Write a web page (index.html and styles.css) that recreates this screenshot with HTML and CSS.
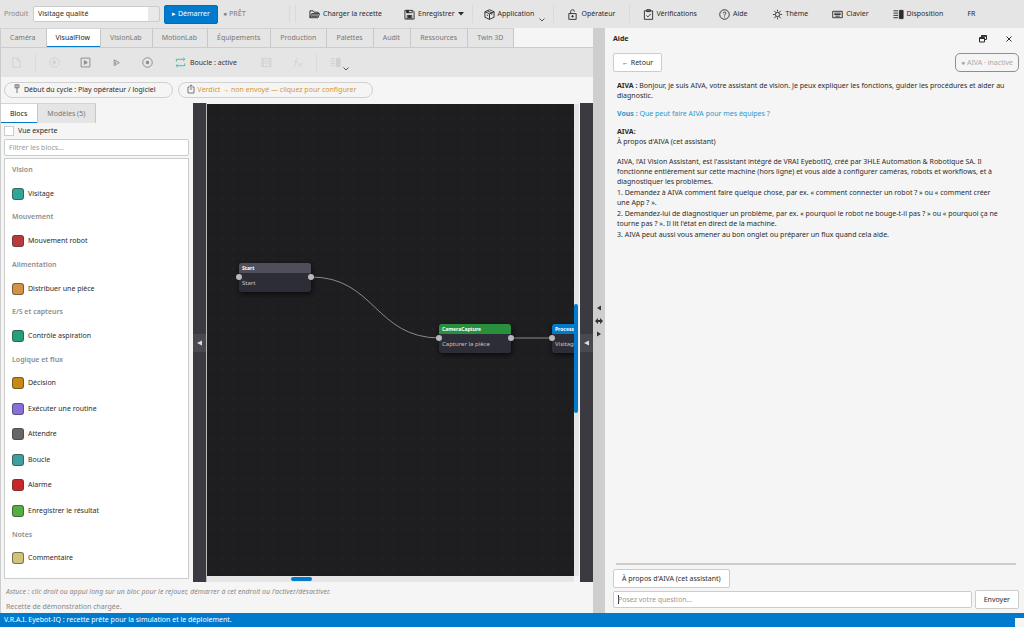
FILE: index.html
```html
<!DOCTYPE html>
<html lang="fr">
<head>
<meta charset="utf-8">
<title>V.R.A.I. Eyebot-IQ</title>
<link rel="stylesheet" href="styles.css">
</head>
<body>
<div class="app">
  <header class="topbar">
    <label class="product" for="product">Produit</label>
    <select class="product-select" id="product"><option>Visitage qualité</option></select>
    <button class="start">▸ Démarrer</button>
    <span class="state">● <b>PRÊT</b></span>
    <i class="sep sep-first"></i><i class="sep"></i>
    <button class="action"><svg class="icon" viewBox="0 0 12 12"><path d="M1 9.500V2h3.500l1 1.500H10V5M1 9.500 3 5h8.500L9.800 9.500zM2.500 8h7M3 6.500h7"/></svg>Charger la recette</button>
    <button class="action menu"><svg class="icon" viewBox="0 0 12 12"><path d="M1 1.500h8.500L11 3v8H1zM3 1.500V4h6V1.500M3.500 11V7h5v4"/><path class="fill" d="M5 7.500h2V10H5zM3 1.500h2V4H3z"/></svg>Enregistrer<svg class="caret" viewBox="0 0 6 4"><path d="M0 0h6L3 3.500z"/></svg></button>
    <i class="sep"></i>
    <button class="action menu"><svg class="icon" viewBox="0 0 12 12"><path d="M6 .8 11 3v6L6 11.300 1 9V3zM1 3l5 2.300L11 3M6 5.300v6M3.500 1.900l5 2.300v2M3 6.500l1.500.7"/></svg>Application<svg class="chevron" viewBox="0 0 6 4"><path d="M.5.500 3 3 5.500.500"/></svg></button>
    <i class="sep"></i>
    <button class="action wide"><svg class="icon" viewBox="0 0 12 12"><path d="M2 5h8v6.300H2zM4 5V2.800C4 .2 8 .2 8 2.500V3"/><circle class="fill" cx="6" cy="8" r=".8"/></svg>Opérateur</button>
    <i class="sep"></i>
    <button class="action wide"><svg class="icon" viewBox="0 0 12 12"><path d="M1.500 2h9v9.300h-9zM4 .8h4v2H4zM3.800 7l1.600 1.600L8.500 5.300"/></svg>Vérifications</button>
    <button class="action"><svg class="icon" viewBox="0 0 12 12"><circle cx="6" cy="6" r="5.200"/><path d="M4.500 4.800c0-2 3-2 3-.2C7.500 5.800 6 5.800 6 7.200M6 8.200v1"/></svg>Aide</button>
    <button class="action"><svg class="icon" viewBox="0 0 12 12"><circle cx="6" cy="6" r="2.300"/><path d="M6 .8v2M6 9.200v2M1 6h2M9 6h2M2.600 2l1.600 2M9.400 2 7.800 4M2.600 10l1.600-2M9.400 10 7.800 8"/></svg>Thème</button>
    <button class="action"><svg class="icon" viewBox="0 0 12 12"><path d="M.8 2.500h10.400v7H.8zM2.500 4.500h7M2.500 6h7M3.500 7.800h5"/></svg>Clavier</button>
    <button class="action"><svg class="icon" viewBox="0 0 12 12"><path d="M.5 2h5M.5 4.500h5M.5 7h5M.5 9.500h5"/><path class="fill" d="M7 1.500h4v9H7z"/></svg>Disposition</button>
    <button class="action">FR</button>
  </header>

  <main class="workspace">
    <section class="editor">
      <nav class="tabs">
        <button class="tab">Caméra</button><button class="tab active">VisualFlow</button><button class="tab">VisionLab</button><button class="tab">MotionLab</button><button class="tab">Équipements</button><button class="tab">Production</button><button class="tab">Palettes</button><button class="tab">Audit</button><button class="tab">Ressources</button><button class="tab">Twin 3D</button>
      </nav>
      <div class="toolbar">
        <button class="tool off" aria-label="Nouveau"><svg class="icon" viewBox="0 0 12 12"><path d="M2 1h5l3 3v7.300H2zM7 1v3h3"/></svg></button>
        <i class="sep"></i>
        <button class="tool off" aria-label="Reprendre"><svg class="icon" viewBox="0 0 12 12"><circle cx="6" cy="6" r="5.200"/><path class="fill" d="M4.800 4v4L8 6z"/></svg></button>
        <button class="tool" aria-label="Exécuter"><svg class="icon" viewBox="0 0 12 12"><path d="M1.200 1.200h9.600v9.600H1.200z"/><path class="fill" d="M4.800 4v4L8 6z"/></svg></button>
        <button class="tool" aria-label="Pas à pas"><svg class="icon" viewBox="0 0 12 12"><path d="M3.500 3v6.500L9 6.200zM5 5v2.500"/></svg></button>
        <button class="tool" aria-label="Arrêter"><svg class="icon" viewBox="0 0 12 12"><circle cx="6" cy="6" r="5.200"/><path class="fill" d="M4.800 4.800h2.400v2.400H4.800z"/></svg></button>
        <button class="tool loop"><svg class="icon" viewBox="0 0 12 12"><path d="M1.500 5V2.500h9M9 .8l1.800 1.700L9 4.200M10.500 7v2.500h-9M3 7.800 1.200 9.500 3 11.200"/></svg>Boucle : active</button>
        <button class="tool off" aria-label="Capture"><svg class="icon" viewBox="0 0 12 12"><path d="M1 1.500h10v9H1zM2.500 1.500v9M9.500 1.500v9"/><circle cx="6" cy="5.500" r="2"/></svg></button>
        <button class="tool off" aria-label="Fonctions"><svg class="icon" viewBox="0 0 12 12"><path d="M6.500 1.500C4.500.8 4.500 3 4 6S3 11 1 10.500M2.500 5h4M7 6.500l4 4M11 6.500l-4 4"/></svg></button>
        <i class="sep"></i>
        <button class="tool off" aria-label="Disposition du flux"><svg class="icon" viewBox="0 0 12 12"><path d="M.5 2h5M.5 4.500h5M.5 7h5M.5 9.500h5"/><path class="fill" d="M7 1.500h4v9H7z"/></svg><svg class="chevron" viewBox="0 0 6 4"><path d="M.5.500 3 3 5.500.500"/></svg></button>
      </div>
      <div class="chips">
        <button class="chip"><svg class="icon" viewBox="0 0 8 10"><path d="M2 .8h4v3H2zM4 .8V7M3 8h2"/></svg>Début du cycle : Play opérateur / logiciel</button>
        <button class="chip warn"><svg class="icon" viewBox="0 0 8 10"><path d="M2.500 3H1v6h6V3H5.500M4 6V1M2.500 2.300 4 .8l1.500 1.500"/></svg>Verdict → non envoyé — cliquez pour configurer</button>
      </div>
      <div class="stage">
        <aside class="library">
          <div class="subtabs"><button class="tab active">Blocs</button><button class="tab">Modèles (5)</button></div>
          <label class="expert"><input type="checkbox">Vue experte</label>
          <input class="filter" type="text" placeholder="Filtrer les blocs..." aria-label="Filtrer les blocs">
          <ul class="blocks">
            <li class="group">Vision</li>
            <li class="block"><i class="swatch teal"></i>Visitage</li>
            <li class="group">Mouvement</li>
            <li class="block"><i class="swatch crimson"></i>Mouvement robot</li>
            <li class="group">Alimentation</li>
            <li class="block"><i class="swatch orange"></i>Distribuer une pièce</li>
            <li class="group">E/S et capteurs</li>
            <li class="block"><i class="swatch emerald"></i>Contrôle aspiration</li>
            <li class="group">Logique et flux</li>
            <li class="block"><i class="swatch amber"></i>Décision</li>
            <li class="block"><i class="swatch violet"></i>Exécuter une routine</li>
            <li class="block"><i class="swatch gray"></i>Attendre</li>
            <li class="block"><i class="swatch cyan"></i>Boucle</li>
            <li class="block"><i class="swatch red"></i>Alarme</li>
            <li class="block"><i class="swatch green"></i>Enregistrer le résultat</li>
            <li class="group">Notes</li>
            <li class="block"><i class="swatch sand"></i>Commentaire</li>
          </ul>
        </aside>
        <div class="rail"><button class="handle" aria-label="Replier la bibliothèque"><svg viewBox="0 0 5 6"><path d="M5 .500v5L0 3z"/></svg></button></div>
        <div class="view">
          <div class="canvas">
            <svg class="wires"><path d="M104 173C168 173 168 234 233 234M305 234h41"/></svg>
            <div class="node start-node"><div class="node-title">Start</div><div class="node-text">Start</div><i class="port in"></i><i class="port out"></i></div>
            <div class="node camera-node"><div class="node-title">CameraCapture</div><div class="node-text">Capturer la pièce</div><i class="port in"></i><i class="port out"></i></div>
            <div class="node process-node"><div class="node-title">Process</div><div class="node-text">Visitage</div><i class="port in"></i></div>
          </div>
          <div class="vscroll"><i class="thumb"></i></div>
          <div class="hscroll"><i class="thumb"></i></div>
        </div>
        <div class="rail rail-right"><button class="handle" aria-label="Replier les propriétés"><svg viewBox="0 0 5 6"><path d="M5 .500v5L0 3z"/></svg></button></div>
      </div>
      <div class="notes">
        <p class="tip">Astuce : clic droit ou appui long sur un bloc pour le rejouer, démarrer à cet endroit ou l'activer/désactiver.</p>
        <p>Recette de démonstration chargée.</p>
      </div>
    </section>

    <div class="splitter">
      <svg viewBox="0 0 8 6"><path d="M6 .500v5L2 3z"/></svg>
      <svg viewBox="0 0 8 6"><path d="M0 3l3-3v2h2V0l3 3-3 3V4H3v2z"/></svg>
      <svg viewBox="0 0 8 6"><path d="M2 .500v5L6 3z"/></svg>
    </div>

    <section class="help">
      <div class="help-head">
        <h2>Aide</h2>
        <button class="plain" aria-label="Détacher"><svg viewBox="0 0 8 8"><path d="M2.500 2.500v-2h5v4h-2M.5 2.500h5v4.500h-5zM.5 3.500h5M2.500 1.300h5"/></svg></button>
        <button class="plain" aria-label="Fermer"><svg viewBox="0 0 8 8"><path d="M1.500 1.500l5 5M6.500 1.500l-5 5"/></svg></button>
      </div>
      <div class="help-bar"><button class="btn">← Retour</button><span class="badge">● AIVA · inactive</span></div>
      <div class="chat">
        <p><b>AIVA :</b> Bonjour, je suis AIVA, votre assistant de vision. Je peux expliquer les fonctions, guider les procédures et aider au diagnostic.</p>
        <p class="you"><b>Vous :</b> Que peut faire AIVA pour mes équipes ?</p>
        <p><b>AIVA:</b><br>À propos d'AIVA (cet assistant)</p>
        <p class="about">AIVA, l'AI Vision Assistant, est l'assistant intégré de VRAI EyebotIQ, créé par 3HLE Automation &amp; Robotique SA. Il fonctionne entièrement sur cette machine (hors ligne) et vous aide à configurer caméras, robots et workflows, et à diagnostiquer les problèmes.</p>
        <p class="step">1. Demandez à AIVA comment faire quelque chose, par ex. « comment connecter un robot ? » ou « comment créer une&nbsp;App&nbsp;?&nbsp;».</p>
        <p class="step">2. Demandez-lui de diagnostiquer un problème, par ex. « pourquoi le robot ne bouge-t-il pas ? » ou « pourquoi ça ne tourne pas ? ». Il lit l'état en direct de la machine.</p>
        <p class="step">3. AIVA peut aussi vous amener au bon onglet ou préparer un flux quand cela aide.</p>
      </div>
      <div class="rule"></div>
      <div class="suggest"><button class="btn">À propos d'AIVA (cet assistant)</button></div>
      <form class="ask"><input type="text" placeholder="Posez votre question..." aria-label="Votre question"><button class="btn" type="button">Envoyer</button></form>
    </section>
  </main>
  <footer class="status"><span>V.R.A.I. Eyebot-IQ : recette prête pour la simulation et le déploiement.</span><i class="grip"></i></footer>
</div>
</body>
</html>
```
FILE: styles.css
```css
* { box-sizing: border-box; }
body { margin: 0; font: 7px/10px "Noto Sans", sans-serif; color: #2b2b2b; background: #f5f5f5; }
button, input, select { font: inherit; color: inherit; margin: 0; border: 0; padding: 0; background: none; border-radius: 0; }
button { white-space: nowrap; }
p, h2, ul { margin: 0; padding: 0; }
i { display: block; }
svg { display: block; fill: none; stroke: currentColor; flex: none; }
.fill { fill: currentColor; }
.icon { width: 11px; height: 11px; }
.app { min-height: 100vh; display: flex; flex-direction: column; }

.topbar { height: 28px; display: flex; align-items: center; background: #e5e5e5; padding-left: 4px; }
.product { width: 29px; color: #8a8a8a; }
.product-select { appearance: none; width: 127px; height: 16px; padding: 0 4px; border: 1px solid #ccc; border-radius: 2px; background: linear-gradient(to left, #e9e9e9 11px, #fff 11px); }
.start { margin-left: 4px; width: 54px; height: 19px; border-radius: 2px; background: #007acc; border: 1px solid #006fbb; color: #fff; }
.state { margin-left: 5px; width: 66px; color: #888; }
.state b { font-weight: 500; }
.sep { width: 1px; height: 18px; background: #dadada; flex: none; }
.sep-first { margin-right: 5px; }
.action { display: flex; align-items: center; gap: 3px; height: 28px; padding: 0 11px 0 13px; }
.action.menu { padding-left: 11px; padding-right: 8px; }
.action.wide { padding-left: 13px; padding-right: 13px; }
.action.wide + .action { padding-left: 9px; }
.caret { width: 6px; height: 4px; fill: currentColor; stroke: none; }
.chevron { width: 6px; height: 4px; align-self: flex-end; margin: 0 0 6px 2px; color: #555; }

.workspace { flex: 1; display: grid; grid-template-columns: minmax(0, 593fr) 12px minmax(0, 419fr); }
.editor { display: flex; flex-direction: column; border-left: 1px solid #ccc; }
.tabs, .subtabs { display: flex; }
.tabs { height: 20px; border-bottom: 1px solid #ccc; }
.tab { padding: 0 10px 0 9px; height: 19px; background: #e5e5e5; color: #777; border-right: 1px solid #c8c8c8; border-top: 1px solid #d4d4d4; }
.tab.active { background: #fff; color: #222; box-shadow: inset 0 -1px #007acc; }
.subtabs .tab { height: 20px; }
.toolbar { display: flex; align-items: center; height: 29px; background: #e5e5e5; padding-left: 10px; color: #8a8a8a; }
.tool { display: flex; align-items: center; height: 29px; margin-right: 20px; }
.tool + .sep { margin-left: -7px; margin-right: 13px; }
.tool.off { color: #d0d0d0; }
.tool.loop { color: #333; gap: 4px; margin: 0 24px 0 2px; }
.tool.loop .icon { color: #2fbf9f; }
.chips { display: flex; gap: 5px; padding: 5px 3px; height: 26px; }
.chip { display: flex; align-items: center; gap: 3px; height: 16px; padding: 0 16px 0 8px; border: 1px solid #d0d0d0; border-radius: 8px; }
.chip .icon { width: 8px; height: 10px; color: #777; margin-bottom: 2px; }
.chip.warn { color: #d6982f; }

.stage { flex: 1; display: flex; }
.library { width: 192px; display: flex; flex-direction: column; padding: 0 4px 3px 3px; }
.subtabs { margin-left: -3px; }
.expert { display: flex; align-items: center; gap: 4px; height: 16px; }
.expert input { appearance: none; width: 10px; height: 10px; background: #fff; border: 1px solid #ccc; }
.filter { height: 17px; padding: 0 4px; background: #fff; border: 1px solid #ccc; border-radius: 2px; }
::placeholder { color: #999; opacity: 1; }
.blocks { flex: 1; display: flex; flex-direction: column; list-style: none; margin-top: 2px; padding: 0 7px 7px; background: #fff; border: 1px solid #ccc; }
.group, .block { display: flex; align-items: center; min-height: 16px; }
.group { flex: 44 0 0; font-weight: 600; color: #8d8d8d; }
.block { flex: 51 0 0; gap: 4px; }
.swatch { width: 12px; height: 12px; border-radius: 3px; border: 1px solid rgba(60, 60, 60, .6); }
.teal { background: #2fa698; } .crimson { background: #b93a3c; } .orange { background: #d49245; } .emerald { background: #26a177; }
.amber { background: #c88912; } .violet { background: #8870dc; } .gray { background: #666; } .cyan { background: #3c9fa1; }
.red { background: #ca2628; } .green { background: #56ad42; } .sand { background: #d1c377; }

.rail { width: 13px; background: #3b3a40; display: flex; align-items: center; }
.rail-right { margin-left: 1px; }
.handle { width: 100%; height: 18px; background: #4a494f; color: #ddd; display: grid; place-items: center; }
.handle svg { width: 5px; height: 6px; fill: currentColor; stroke: none; }
.view { flex: 1; min-width: 0; display: grid; grid-template-columns: minmax(0, 1fr) 5px; grid-template-rows: 1fr 6px; padding-top: 1px; border-left: 1px solid #bbb; }
.canvas { position: relative; overflow: hidden; background: #1e1e20 radial-gradient(circle, #232326 0, #232326 1px, transparent 1px) 1px 0 / 10px 10px; }
.wires { position: absolute; inset: 0; width: 100%; height: 100%; color: #8a8a8a; }
.node { position: absolute; width: 72px; height: 29px; border-radius: 3px; background: #2d2d37; box-shadow: 1px 2px 5px #0c0c0d; color: #c4c4c4; }
.node-title { height: 10px; line-height: 10px; padding: 0 3px; border-radius: 3px 3px 0 0; font-weight: 700; font-size: 5px; color: #fff; background: #4f4e59; }
.node-text { padding: 5px 3px; font-size: 6px; }
.start-node { left: 32px; top: 159px; }
.camera-node { left: 232px; top: 220px; }
.process-node { left: 345px; top: 220px; }
.camera-node .node-title { background: #28903c; }
.process-node .node-title { background: #007acc; }
.port { position: absolute; top: 11px; width: 6px; height: 6px; border-radius: 3px; background: #b9b9b9; }
.port.in { left: -3px; }
.port.out { right: -3px; }
.vscroll, .hscroll { background: #e6e6e6; display: flex; }
.vscroll { flex-direction: column; }
.thumb { background: #007acc; border-radius: 2px; }
.vscroll .thumb { width: 4px; height: 23%; margin-top: 200px; }
.hscroll .thumb { width: 21px; height: 4px; margin: 1px 0 0 23%; }

.notes { padding: 5px 4px 1px 5px; color: #888; height: 31px; display: flex; flex-direction: column; gap: 5px; }
.tip { font-style: italic; white-space: nowrap; }

.splitter { background: #cecece; display: flex; flex-direction: column; align-items: center; justify-content: center; gap: 7px; color: #333; }
.splitter svg { width: 8px; height: 6px; fill: currentColor; stroke: none; }

.help { display: flex; flex-direction: column; padding: 0 5px 4px 8px; }
.help-head { display: flex; align-items: center; height: 21px; gap: 18px; padding-right: 6px; }
.help-head h2 { flex: 1; font-size: 7px; line-height: 10px; font-weight: 700; }
.plain svg { width: 8px; height: 8px; }
.help-bar { display: flex; justify-content: space-between; margin-top: 4px; }
.btn { height: 19px; padding: 0 8px; background: #fff; border: 1px solid #ccc; border-radius: 2px; }
.badge { height: 19px; line-height: 17px; padding: 0 5px; border: 1px solid #8e8e8e; border-radius: 5px; color: #aaa; }
.chat { flex: 1; padding: 9px 4px 0; }
.chat p + p { margin-top: 8px; }
.chat .you { color: #2f95c8; }
.chat p.about { margin-top: 10px; }
.chat p.step { margin-top: 1px; }
.rule { height: 2px; margin: 0 3px 4px; background: #ccc; }
.ask { display: flex; align-items: center; gap: 3px; margin-top: 2px; }
.ask input { flex: 1; height: 17px; padding: 0 4px; background: linear-gradient(#333, #333) 4px 3px / 1px 9px no-repeat #fff; border: 1px solid #ccc; border-radius: 2px; }

.status { display: flex; justify-content: space-between; align-items: center; height: 14px; padding-left: 4px; background: #007acc; color: #fff; }
.grip { align-self: flex-end; width: 9px; height: 9px; background: #f5f5f5; }
```
